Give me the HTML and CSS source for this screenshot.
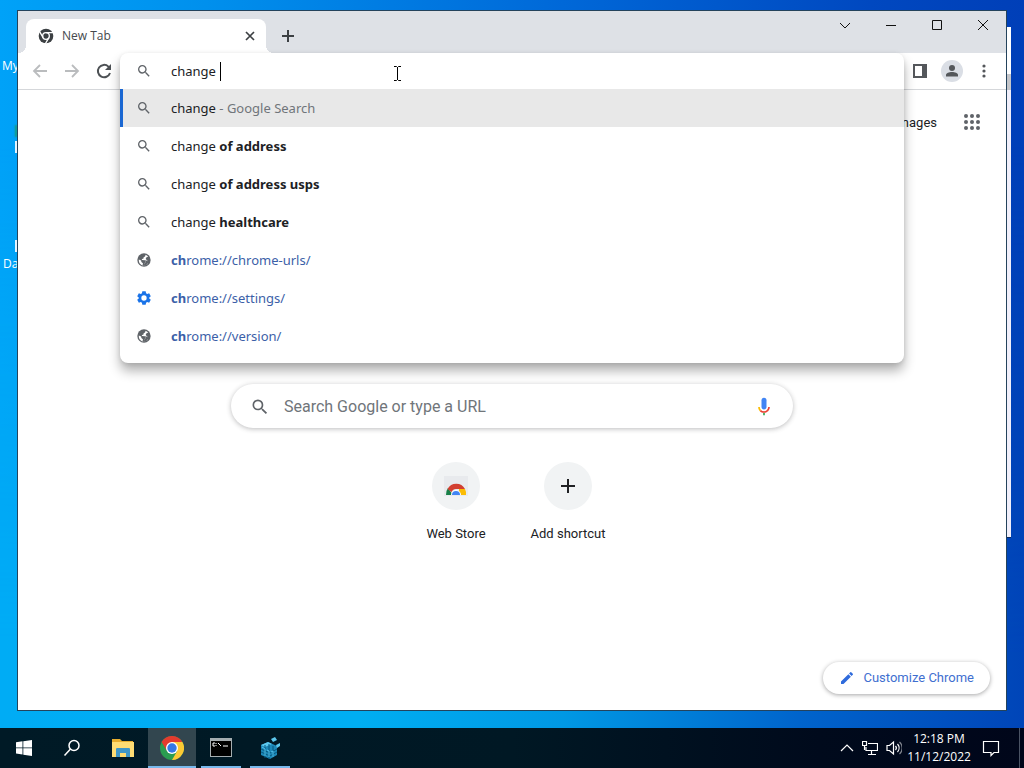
FILE: index.html
```html
<!DOCTYPE html>
<html lang="en">
<head>
<meta charset="utf-8">
<title>New Tab</title>
<link rel="stylesheet" href="styles.css">
</head>
<body>
<svg class="defs" aria-hidden="true">
  <symbol id="search" viewBox="0 0 24 24"><path d="M15.5 14h-.79l-.28-.27A6.47 6.47 0 0 0 16 9.5 6.5 6.5 0 1 0 9.5 16c1.61 0 3.09-.59 4.23-1.57l.27.28v.79l5 4.99L20.49 19l-4.99-5zm-6 0C7.01 14 5 11.99 5 9.5S7.01 5 9.5 5 14 7.01 14 9.5 11.99 14 9.5 14z"/></symbol>
  <symbol id="globe" viewBox="0 0 24 24"><circle cx="12" cy="12" r="10"/><path fill="#fff" d="M14 4.300c.6 1.800-.5 3.200-2.500 3.700l-.5 2-2.200.5.2 1.500 4.500.3 1 2.700-1.500 1.500-.3 3.200-1.700 1-1.200-.4.600-3.300-2.400-2-.2-2.200-3.600-1.600C4 14 4.800 16 6 17.500c3 3.500 8 3.500 11 1l1-2.500-1.500-1.500.8-1.500-2.800-2.500 1.200-2.500 2.500-.8C17.200 5.700 15.800 4.700 14 4.300z"/><path d="M13.500 12.500 17 13l1.500 3-3 3.500-4 .8 1.500-3.500 1.500-1.800z"/></symbol>
  <symbol id="gear" viewBox="0 0 24 24"><path fill-rule="evenodd" d="M9.500 2h5l.6 3 1.700 1 2.900-1 2.500 4.300-2.300 2v1.400l2.300 2-2.500 4.300-2.900-1-1.700 1-.6 3h-5l-.6-3-1.700-1-2.900 1-2.500-4.300 2.300-2v-1.400l-2.300-2L4.300 5l2.900 1 1.700-1zM12 8a4 4 0 1 0 0 8 4 4 0 0 0 0-8z"/></symbol>
</svg>

<div class="screen">
  <main class="desktop">
    <div class="desktop-icon icon-pc">My</div>
    <div class="desktop-icon icon-bin"></div>
    <div class="desktop-icon icon-data">Da</div>
    <div class="back-window"></div>

    <section class="window">
      <header class="tabstrip">
        <div class="tab">
          <svg class="i16" viewBox="0 0 24 24"><circle cx="12" cy="12" r="11" fill="#3c4043"/><g fill="none" stroke="#fff" stroke-width="2"><circle cx="12" cy="12" r="5"/><path d="M12 7h11M7.700 14.500 2.200 5M16.300 14.500l-5.500 9.500"/></g></svg>
          <span class="tab-title">New Tab</span>
          <button class="plain tab-close" aria-label="Close tab"><svg class="i12" viewBox="0 0 12 12"><path d="m2 2 8 8m0-8-8 8" fill="none" stroke="#3c4043" stroke-width="1.700"/></svg></button>
        </div>
        <button class="plain new-tab" aria-label="New tab"><svg class="i14" viewBox="0 0 14 14"><path d="M7 1v12M1 7h12" stroke="#3c4043" stroke-width="2"/></svg></button>
        <div class="window-controls">
          <button class="plain" aria-label="Search tabs"><svg class="i12" viewBox="0 0 12 12"><path d="m1 4 5 5 5-5"/></svg></button>
          <button class="plain" aria-label="Minimize"><svg class="i12" viewBox="0 0 12 12"><path d="M1 6.500h10"/></svg></button>
          <button class="plain" aria-label="Maximize"><svg class="i12" viewBox="0 0 12 12"><path d="M1.500 1.500h9v9h-9z"/></svg></button>
          <button class="plain" aria-label="Close"><svg class="i12" viewBox="0 0 12 12"><path d="m1 1 10 10m0-10L1 11"/></svg></button>
        </div>
      </header>

      <div class="toolbar">
        <nav class="nav">
          <button class="plain muted" aria-label="Back"><svg class="i16" viewBox="0 0 16 16"><path d="M15 8H2m6-6L2 8l6 6" fill="none" stroke="currentColor" stroke-width="1.800"/></svg></button>
          <button class="plain muted" aria-label="Forward"><svg class="i16" viewBox="0 0 16 16"><path d="M1 8h13M8 2l6 6-6 6" fill="none" stroke="currentColor" stroke-width="1.800"/></svg></button>
          <button class="plain" aria-label="Reload"><svg class="i16" viewBox="0 0 16 16"><path d="M14 10a6.200 6.200 0 1 1-1.600-6.400L13.500 5" fill="none" stroke="#4d5155" stroke-width="2"/><path d="M15 1v6H9z" fill="#4d5155"/></svg></button>
        </nav>
        <div class="omnibox">
          <div class="popup">
            <div class="entry">
              <svg class="i16 grey"><use href="#search"/></svg>
              <label class="typed" for="address">change</label>
              <span class="caret"></span>
              <input id="address" class="address" type="text" aria-label="Address and search bar">
            </div>
            <ul class="suggestions">
              <li class="selected"><svg class="i16 grey"><use href="#search"/></svg><span>change <span class="note">- Google Search</span></span></li>
              <li><svg class="i16 grey"><use href="#search"/></svg><span>change <b>of address</b></span></li>
              <li><svg class="i16 grey"><use href="#search"/></svg><span>change <b>of address usps</b></span></li>
              <li><svg class="i16 grey"><use href="#search"/></svg><span>change <b>healthcare</b></span></li>
              <li><svg class="i16 grey"><use href="#globe"/></svg><a href="#urls"><b>ch</b>rome://chrome-urls/</a></li>
              <li><svg class="i16 blue"><use href="#gear"/></svg><a href="#settings"><b>ch</b>rome://settings/</a></li>
              <li><svg class="i16 grey"><use href="#globe"/></svg><a href="#version"><b>ch</b>rome://version/</a></li>
            </ul>
            <svg class="pointer" viewBox="0 0 9 17"><path d="M1 1.500h2.500l1 1 1-1H8M4.500 2v13M1 15.500h2.500l1-1 1 1H8" fill="none" stroke="#000"/></svg>
          </div>
        </div>
        <div class="actions">
          <button class="plain" aria-label="Side panel"><svg class="i16" viewBox="0 0 16 16"><path d="M1 1h14v14H1z" fill="#54575b"/><path d="M3 3h7v10H3z" fill="#fff"/></svg></button>
          <button class="plain" aria-label="Profile"><svg class="i22" viewBox="0 0 22 22"><circle cx="11" cy="11" r="11" fill="#dadee5"/><circle cx="11" cy="8" r="3" fill="#54575b"/><path d="M5 16.500V15c0-4 12-4 12 0v1.500z" fill="#54575b"/></svg></button>
          <button class="plain" aria-label="Menu"><svg class="i16" viewBox="0 0 16 16" fill="#54575b"><circle cx="8" cy="3" r="1.600"/><circle cx="8" cy="8" r="1.600"/><circle cx="8" cy="13" r="1.600"/></svg></button>
        </div>
      </div>

      <div class="page">
        <div class="page-head">
          <a class="images" href="#images">Images</a>
          <button class="plain" aria-label="Google apps"><svg class="i18" viewBox="0 0 18 18" fill="#5f6368"><circle cx="3" cy="3" r="2"/><circle cx="9" cy="3" r="2"/><circle cx="15" cy="3" r="2"/><circle cx="3" cy="9" r="2"/><circle cx="9" cy="9" r="2"/><circle cx="15" cy="9" r="2"/><circle cx="3" cy="15" r="2"/><circle cx="9" cy="15" r="2"/><circle cx="15" cy="15" r="2"/></svg></button>
        </div>
        <form class="search-box">
          <svg class="i20 grey"><use href="#search"/></svg>
          <input type="text" aria-label="Search" placeholder="Search Google or type a URL">
          <button class="plain" type="button" aria-label="Voice search"><svg class="i20" viewBox="0 0 24 24"><path fill="#4285f4" d="M12 15c1.700 0 3-1.300 3-3V4a3 3 0 1 0-6 0v8c0 1.700 1.300 3 3 3z"/><path fill="#34a853" d="M11 18.900h2V22h-2z"/><path fill="#fbbc04" d="M7 12H5c0 2 .7 3.700 2 5l1.400-1.400A5 5 0 0 1 7 12z"/><path fill="#ea4335" d="M12 17a5 5 0 0 1-3.600-1.400L7 17c1.300 1.300 3 2 5 2 3.900 0 7-3.100 7-7h-2a5 5 0 0 1-5 5z"/></svg></button>
        </form>
        <div class="shortcuts">
          <a class="shortcut" href="#store"><span class="disc"><svg class="i24" viewBox="0 0 24 24"><path fill="#e8eaed" d="M0 2h24v20H0z"/><path fill="#188048" d="M2 21a10 10 0 0 1 2-7l5 7z"/><path fill="#fbbc04" d="M15 15h6a10 10 0 0 1 1 6h-7z"/><path fill="#d23f31" d="M3.500 15a10 10 0 0 1 17.500 0h-9c-2 0-3.500 1-4.500 3z"/><path fill="#fff" d="M7 21a5 5 0 0 1 10 0z"/><path fill="#4285f4" d="M8 21a4 4 0 0 1 8 0z"/></svg></span>Web Store</a>
          <a class="shortcut" href="#add"><span class="disc"><svg class="i14" viewBox="0 0 14 14"><path d="M7 0v14M0 7h14" stroke="#202124" stroke-width="2"/></svg></span>Add shortcut</a>
        </div>
        <button class="customize"><svg class="i16" viewBox="0 0 24 24" fill="#2f6bdc"><path d="M3 17.250V21h3.750L17.800 9.940l-3.750-3.750zM20.700 7.040a1 1 0 0 0 0-1.410l-2.340-2.340a1 1 0 0 0-1.410 0l-1.830 1.830 3.750 3.750z"/></svg>Customize Chrome</button>
      </div>
    </section>
  </main>

  <footer class="taskbar">
    <button class="plain task" aria-label="Start"><svg class="i16" viewBox="0 0 16 16" fill="#fff"><path d="M0 2.200 6.500 1.300v6.200H0zM7.300 1.200 16 0v7.500H7.300zM0 8.300h6.500v6.200L0 13.600zM7.300 8.300H16V16l-8.700-1.300z"/></svg></button>
    <button class="plain task" aria-label="Search"><svg class="i18" viewBox="0 0 18 18" fill="none" stroke="#fff" stroke-width="1.500"><circle cx="11" cy="6.500" r="5"/><path d="m7.500 10-6 6.500"/></svg></button>
    <div class="apps">
      <button class="plain task" aria-label="File Explorer"><svg class="i22" viewBox="0 0 22 22"><path fill="#e8ad2e" d="M0 2h8l2 2h11v5H0z"/><path fill="#ffdc73" d="M0 5h22v15H0z"/><path fill="#3f96c8" d="M4 20v-8c0-1 1-1 1-1h12c1 0 1 1 1 1v8h-4v-4H8v4z"/></svg></button>
      <button class="plain task active" aria-label="Chrome"><svg class="i24" viewBox="0 0 24 24"><circle cx="12" cy="12" r="12" fill="#2a9d50"/><path fill="#e33b2e" d="M1.600 6a12 12 0 0 1 20.800 0H12L7 15z"/><path fill="#fcc934" d="M12 6h10.400A12 12 0 0 1 12 24l5.200-9z"/><circle cx="12" cy="12" r="6" fill="#fff"/><circle cx="12" cy="12" r="4.700" fill="#3478e5"/></svg></button>
      <button class="plain task running" aria-label="Command Prompt"><svg class="i22" viewBox="0 0 22 22"><path fill="#a5adb0" d="M0 1h22v19H0z"/><path d="M1 4h20v15H1z" fill="#000"/><path d="M5 6H3v3h2M6 6v1m0 1v1m2-3 3 3m2 0h5" fill="none" stroke="#fff"/></svg></button>
      <button class="plain task running" aria-label="Registry Editor"><svg class="i22" viewBox="0 0 22 22"><path fill="#1c88b8" d="m2 8 7-3 9 4v9l-7 4-9-4z"/><path fill="#5dc8ee" d="m2 8 7-3 4 2-7 3zM12 2l4-2 2 3-4 2zM17 8l4-2v3l-3 2z"/><path d="M6 8v13M10 7v15M14 9v11M2 12l9 4 7-4M2 15l9 4 7-4" fill="none" stroke="#07597f"/><path d="m3 10 3 2v7m2-6 2 1v6m2-5 2-1v6" fill="none" stroke="#55c5ef"/></svg></button>
    </div>
    <div class="tray">
      <button class="plain" aria-label="Show hidden icons"><svg class="i14" viewBox="0 0 14 14"><path d="m1 10 6-6 6 6"/></svg></button>
      <button class="plain" aria-label="Network"><svg class="i16" viewBox="0 0 16 16"><path d="M6 3.500h9.500v7H4V7M9.500 11v3M6 14.500h8M.500 1.500h4v4h-4zM2.500 6v4"/></svg></button>
      <button class="plain" aria-label="Volume"><svg class="i16" viewBox="0 0 16 16"><path d="M1 5.500h2.500l4-3.500v12l-4-3.500H1zM9.500 6a3 3 0 0 1 0 4M11.500 4a6 6 0 0 1 0 8"/><path d="M13.500 2a8 8 0 0 1 0 12" opacity=".5"/></svg></button>
      <div class="clock"><time>12:18 PM</time><time>11/12/2022</time></div>
      <button class="plain notices" aria-label="Notifications"><svg class="i18" viewBox="0 0 18 18"><path d="M1.500 2.500h15v11H12l-3 3v-3H1.500z"/></svg></button>
      <span class="peek"></span>
    </div>
  </footer>
</div>
</body>
</html>
```

FILE: styles.css
```css
* { box-sizing: border-box; }
body { margin: 0; font-family: Roboto, "Liberation Sans", sans-serif; color: #202124; }
a { color: inherit; text-decoration: none; }
svg { display: block; flex: none; }
.defs { position: absolute; width: 0; height: 0; }
.plain { display: flex; align-items: center; justify-content: center; padding: 0; border: 0; background: none; color: #4d5155; }
.i12 { width: 12px; height: 12px; }
.i14 { width: 14px; height: 14px; }
.i16 { width: 16px; height: 16px; }
.i18 { width: 18px; height: 18px; }
.i20 { width: 20px; height: 20px; }
.i22 { width: 22px; height: 22px; }
.i24 { width: 24px; height: 24px; }
.grey { fill: #5f6368; }
.blue { fill: #1a73e8; }

.screen { display: flex; flex-direction: column; height: 100vh; min-height: 600px; overflow: hidden; }
.desktop {
  position: relative;
  flex: 1;
  background: linear-gradient(90deg, #00a2f8 0%, #0090ed 20%, #0068d8 55%, #0048c0 85%, #003fb8 100%);
}
.desktop::before {
  content: "";
  position: absolute;
  inset: 0;
  background: linear-gradient(90deg, #00acf5 0%, #00aef2 35%, #0098e4 55%, #0064cc 78%, #0045b8 100%);
  mask-image: linear-gradient(transparent 20%, #000 90%);
}
.desktop-icon { position: absolute; font: 12px/16px "Open Sans", sans-serif; color: #fff; }
.icon-pc { left: 2px; top: 58px; }
.icon-bin { left: 15px; top: 141px; width: 2px; height: 12px; background: #e4f4ff; box-shadow: 0 -16px 2px #1a9c70; }
.icon-data { left: 3px; top: 256px; }
.icon-data::before { content: ""; position: absolute; left: 12px; top: -16px; width: 2px; height: 12px; background: #e4f4ff; }
.back-window { position: absolute; top: 27px; right: 13px; bottom: 190px; width: 40px; background: linear-gradient(#fff 47px, #c5c6ca 47px, #c5c6ca 63px, #f1effa 63px); border-bottom: 1px solid #0a2a60; }

.window {
  position: absolute;
  inset: 10px 17px 17px 17px;
  display: flex;
  flex-direction: column;
  border: 1px solid #24435c;
  background: #fff;
}
.tabstrip { display: flex; align-items: flex-start; height: 42px; padding-left: 8px; background: #dee1e6; }
.tab {
  position: relative;
  display: flex;
  align-items: center;
  gap: 8px;
  width: 240px;
  height: 34px;
  margin-top: 8px;
  padding: 0 10px 0 12px;
  border-radius: 8px 8px 0 0;
  background: #fff;
}
.tab::before, .tab::after { content: ""; position: absolute; bottom: 0; width: 8px; height: 8px; }
.tab::before { left: -8px; background: radial-gradient(circle at 0 0, transparent 8px, #fff 8px); }
.tab::after { right: -8px; background: radial-gradient(circle at 100% 0, transparent 8px, #fff 8px); }
.tab-title { flex: 1; font: 12px/16px "Open Sans", sans-serif; color: #45494d; }
.new-tab { width: 28px; height: 28px; margin: 11px 0 0 8px; }
.window-controls { display: flex; margin-left: auto; }
.window-controls .plain { width: 46px; height: 28px; }
.window-controls svg { fill: none; stroke: #111; }

.toolbar { display: flex; height: 37px; border-bottom: 1px solid #d5d7da; }
.nav { display: flex; align-items: center; width: 102px; padding-left: 6px; }
.nav .plain { width: 32px; height: 32px; }
.nav .muted { color: #babcbe; }
.omnibox { position: relative; flex: 1; }
.popup {
  position: absolute;
  z-index: 2;
  inset: 0 0 auto 0;
  padding-bottom: 8px;
  border-radius: 8px;
  background: #fff;
  box-shadow: 0 8px 12px rgba(0, 0, 0, .3), 0 1px 4px rgba(0, 0, 0, .1);
  font: 13px/20px "Noto Sans", "Open Sans", sans-serif;
}
.entry { display: flex; align-items: center; height: 36px; padding-left: 16px; }
.typed { margin-left: 19px; }
.caret { width: 1px; height: 19px; margin-left: 4px; background: #000; }
.address { flex: 1; min-width: 0; padding: 0; border: 0; outline: 0; background: none; font: inherit; }
.suggestions { margin: 0; padding: 0; list-style: none; }
.suggestions li { display: flex; align-items: center; gap: 19px; height: 38px; padding-left: 16px; }
.suggestions .selected { background: #e8e8e8; box-shadow: inset 3px 0 #1a67d2; }
.suggestions a { color: #3c5fa8; }
.suggestions b { font-weight: 700; }
.note { color: #70757a; }
.pointer { position: absolute; left: 273px; top: 12px; width: 9px; height: 17px; }
.actions { display: flex; align-items: center; gap: 13px; padding: 0 14px 0 8px; }

.page { position: relative; flex: 1; display: flex; flex-direction: column; align-items: center; }
.page-head { display: flex; align-items: center; align-self: stretch; justify-content: flex-end; gap: 26px; height: 64px; padding-right: 25px; font-size: 13px; }
.search-box {
  display: flex;
  align-items: center;
  width: 562px;
  max-width: 90%;
  height: 44px;
  margin: 230px 0 0;
  padding: 2px 19px 0 19px;
  border-radius: 22px;
  background: #fff;
  box-shadow: 0 1px 5px rgba(32, 33, 36, .3);
}
.search-box input { flex: 1; min-width: 0; margin-left: 14px; padding: 0; border: 0; outline: 0; background: none; font: 16px/20px Roboto, sans-serif; }
.search-box input::placeholder { color: #70757a; opacity: 1; }
.shortcuts { display: flex; padding-top: 34px; }
.shortcut { display: flex; flex-direction: column; align-items: center; gap: 16px; width: 112px; font-size: 13px; line-height: 16px; }
.disc { display: flex; align-items: center; justify-content: center; width: 48px; height: 48px; border-radius: 50%; background: #f1f3f4; }
.customize {
  position: absolute;
  right: 16px;
  bottom: 16px;
  display: flex;
  align-items: center;
  gap: 8px;
  height: 32px;
  padding: 0 16px;
  border: 0;
  border-radius: 16px;
  background: #fff;
  box-shadow: 0 1px 4px rgba(32, 33, 36, .4);
  font: 13px/16px Roboto, sans-serif;
  color: #3f6fd0;
}

.taskbar { display: flex; height: 40px; background: linear-gradient(90deg, #001a26 0%, #001824 50%, #000a1c 80%, #00061a 100%); }
.task { width: 48px; height: 40px; }
.apps { display: flex; gap: 1px; margin-left: 3px; }
.active { background: #32464f; box-shadow: inset 0 -2px #78b8ec; }
.running { background: linear-gradient(#78b8ec, #78b8ec) 50% 100% / 40px 2px no-repeat; }
.tray { display: flex; align-items: center; gap: 8px; margin-left: auto; }
.tray svg { fill: none; stroke: #fff; stroke-width: 1.2; }
.clock { display: flex; flex-direction: column; align-items: center; font: 12px/18px "Open Sans", sans-serif; color: #fff; }
.clock { width: 58px; }
.notices { margin-left: 6px; }
.peek { width: 1px; height: 40px; margin: 0 4px 0 11px; background: #4a5364; }
```
